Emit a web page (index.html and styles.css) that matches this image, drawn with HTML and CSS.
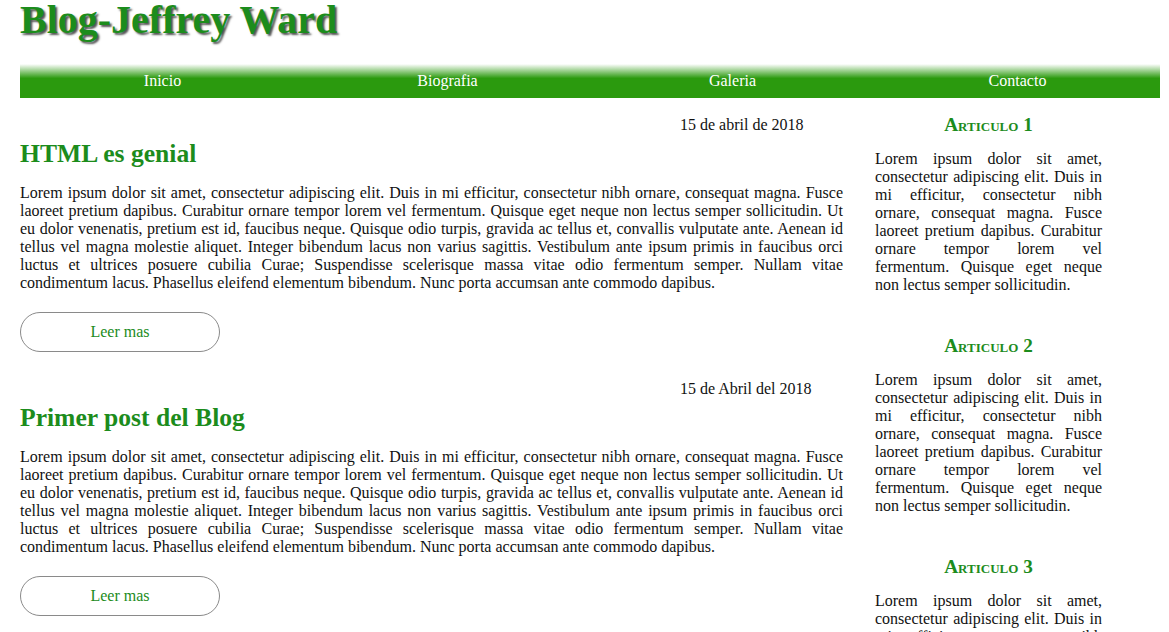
FILE: index.html
```html
<!DOCTYPE html>
<html lang="es">
<head>
<meta charset="utf-8">
<title>Blog-Jeffrey Ward</title>
<link rel="stylesheet" href="styles.css">
</head>
<body>
<div class="page">
  <header class="site-header">
    <h1 class="site-title">Blog-Jeffrey Ward</h1>
  </header>
  <nav class="main-nav">
    <a href="#" class="nav-link">Inicio</a>
    <a href="#" class="nav-link">Biografia</a>
    <a href="#" class="nav-link">Galeria</a>
    <a href="#" class="nav-link">Contacto</a>
  </nav>
  <div class="layout">
    <main class="posts">
      <article class="post">
        <p class="post-date">15 de abril de 2018</p>
        <h2 class="post-title">HTML es genial</h2>
        <p class="post-body">Lorem ipsum dolor sit amet, consectetur adipiscing elit. Duis in mi efficitur, consectetur nibh ornare, consequat magna. Fusce laoreet pretium dapibus. Curabitur ornare tempor lorem vel fermentum. Quisque eget neque non lectus semper sollicitudin. Ut eu dolor venenatis, pretium est id, faucibus neque. Quisque odio turpis, gravida ac tellus et, convallis vulputate ante. Aenean id tellus vel magna molestie aliquet. Integer bibendum lacus non varius sagittis. Vestibulum ante ipsum primis in faucibus orci luctus et ultrices posuere cubilia Curae; Suspendisse scelerisque massa vitae odio fermentum semper. Nullam vitae condimentum lacus. Phasellus eleifend elementum bibendum. Nunc porta accumsan ante commodo dapibus.</p>
        <a href="#" class="read-more">Leer mas</a>
      </article>
      <article class="post">
        <p class="post-date">15 de Abril del 2018</p>
        <h2 class="post-title">Primer post del Blog</h2>
        <p class="post-body">Lorem ipsum dolor sit amet, consectetur adipiscing elit. Duis in mi efficitur, consectetur nibh ornare, consequat magna. Fusce laoreet pretium dapibus. Curabitur ornare tempor lorem vel fermentum. Quisque eget neque non lectus semper sollicitudin. Ut eu dolor venenatis, pretium est id, faucibus neque. Quisque odio turpis, gravida ac tellus et, convallis vulputate ante. Aenean id tellus vel magna molestie aliquet. Integer bibendum lacus non varius sagittis. Vestibulum ante ipsum primis in faucibus orci luctus et ultrices posuere cubilia Curae; Suspendisse scelerisque massa vitae odio fermentum semper. Nullam vitae condimentum lacus. Phasellus eleifend elementum bibendum. Nunc porta accumsan ante commodo dapibus.</p>
        <a href="#" class="read-more">Leer mas</a>
      </article>
    </main>
    <aside class="sidebar">
      <section class="side-item">
        <h3 class="side-title">Articulo 1</h3>
        <p class="side-body">Lorem ipsum dolor sit amet, consectetur adipiscing elit. Duis in mi efficitur, consectetur nibh ornare, consequat magna. Fusce laoreet pretium dapibus. Curabitur ornare tempor lorem vel fermentum. Quisque eget neque non lectus semper sollicitudin.</p>
      </section>
      <section class="side-item">
        <h3 class="side-title">Articulo 2</h3>
        <p class="side-body">Lorem ipsum dolor sit amet, consectetur adipiscing elit. Duis in mi efficitur, consectetur nibh ornare, consequat magna. Fusce laoreet pretium dapibus. Curabitur ornare tempor lorem vel fermentum. Quisque eget neque non lectus semper sollicitudin.</p>
      </section>
      <section class="side-item">
        <h3 class="side-title">Articulo 3</h3>
        <p class="side-body">Lorem ipsum dolor sit amet, consectetur adipiscing elit. Duis in mi efficitur, consectetur nibh ornare, consequat magna. Fusce laoreet pretium dapibus. Curabitur ornare tempor lorem vel fermentum. Quisque eget neque non lectus semper sollicitudin.</p>
      </section>
    </aside>
  </div>
</div>
</body>
</html>
```
FILE: styles.css
```css
html, body {
  margin: 0;
  padding: 0;
  background: #ffffff;
}

body {
  font-family: "Liberation Serif", "Times New Roman", serif;
  font-size: 16px;
  line-height: 18px;
  color: #111111;
}

.page {
  padding: 0 9px 0 20px;
}

.site-header {
  margin: 0;
}

.site-title {
  margin: 0;
  font-size: 40px;
  line-height: 40px;
  font-weight: bold;
  color: #1c8c1c;
  text-shadow: 2px 2px 2px #555555;
}

.main-nav {
  display: grid;
  grid-template-columns: repeat(4, 1fr);
  width: 1140px;
  height: 34px;
  margin-top: 24px;
  align-items: center;
  background: linear-gradient(to bottom, #ffffff 0%, #2b9a0e 42%, #2b9a0e 100%);
}

.nav-link {
  color: #ffffff;
  text-decoration: none;
  text-align: center;
  line-height: 18px;
}

.layout {
  display: grid;
  grid-template-columns: 823px 317px;
  margin-top: 18px;
}

.post {
  display: flex;
  flex-direction: column;
  align-items: flex-start;
  padding-bottom: 28px;
}

.post-date {
  margin: 0;
  padding-left: 660px;
}

.post-title {
  margin: 5px 0 0;
  font-size: 25.6px;
  line-height: 30px;
  color: #1c8c1c;
}

.post-body {
  margin: 15px 0 0;
  text-align: justify;
}

.read-more {
  display: flex;
  align-items: center;
  justify-content: center;
  box-sizing: border-box;
  width: 200px;
  height: 40px;
  margin-top: 20px;
  border: 1px solid #8a8a8a;
  border-radius: 20px;
  color: #1c8c1c;
  text-decoration: none;
}

.sidebar {
  padding: 0 58px 0 32px;
}

.side-item {
  padding-bottom: 43px;
}

.side-title {
  margin: 0;
  text-align: center;
  font-size: 19.2px;
  line-height: 18px;
  font-variant: small-caps;
  color: #1c8c1c;
}

.side-body {
  margin: 16px 0 0;
  text-align: justify;
}
```
